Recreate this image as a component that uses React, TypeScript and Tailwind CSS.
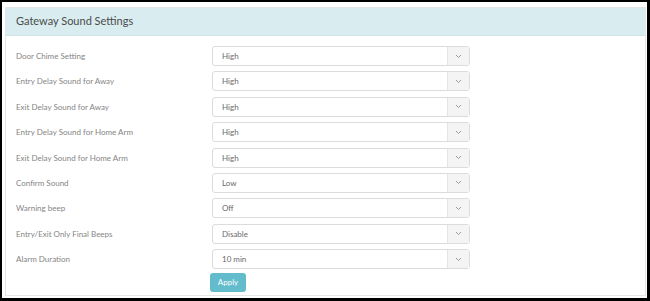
import React from 'react';

const rows = [
  { label: 'Door Chime Setting', value: 'High' },
  { label: 'Entry Delay Sound for Away', value: 'High' },
  { label: 'Exit Delay Sound for Away', value: 'High' },
  { label: 'Entry Delay Sound for Home Arm', value: 'High' },
  { label: 'Exit Delay Sound for Home Arm', value: 'High' },
  { label: 'Confirm Sound', value: 'Low' },
  { label: 'Warning beep', value: 'Off' },
  { label: 'Entry/Exit Only Final Beeps', value: 'Disable' },
  { label: 'Alarm Duration', value: '10 min' },
];

const Select: React.FC<{ value: string }> = ({ value }) => (
  <div className="flex h-[20px] w-[258px] rounded-[3px] border border-[#dcdcdc] bg-white">
    <div className="flex flex-1 items-center pl-[9px] text-[8px] text-[#6a6a6a]">{value}</div>
    <div className="flex w-[22px] items-center justify-center border-l border-[#e4e4e4] bg-[#f4f4f4]">
      <svg width="7" height="5" viewBox="0 0 7 5" fill="none">
        <path d="M1 1l2.5 2.5L6 1" stroke="#999" strokeWidth="1" />
      </svg>
    </div>
  </div>
);

const App: React.FC = () => {
  return (
    <div className="h-[301px] w-[650px] bg-black pl-[2px] pr-[3px] pt-[2px] pb-[3px]" style={{ fontFamily: 'Lato, "Open Sans", sans-serif' }}>
      <div className="h-full w-full bg-white pl-[3px] pt-[5px] pr-[1px]">
        <div className="h-[289px] border border-[#e6e6e6]">
          <div className="flex h-[28px] items-center border-b border-[#cfe3e6] bg-[#d9edf0] pl-[10px] text-[11px] text-[#4a4a4a]">
            Gateway Sound Settings
          </div>
          <div className="flex flex-col gap-[5.4px] pt-[10px]">
            {rows.map((r) => (
              <div key={r.label} className="flex items-center">
                <div className="w-[206px] pl-[10px] text-[8px] text-[#858585]">{r.label}</div>
                <Select value={r.value} />
              </div>
            ))}
            <div className="-mt-[2px] flex pl-[204px]">
              <button className="h-[19px] w-[36px] rounded-[3px] bg-[#62bccc] text-[8px] text-white">Apply</button>
            </div>
          </div>
        </div>
      </div>
    </div>
  );
};

export default App;
